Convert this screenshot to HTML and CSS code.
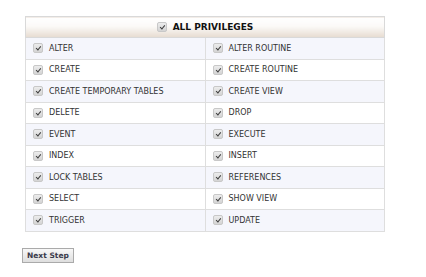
FILE: index.html
```
<!DOCTYPE html>
<html lang="en">
<head>
  <meta charset="UTF-8" />
  <title>Privileges</title>
  <link rel="stylesheet" href="styles.css">
</head>
<body>

  <table class="privs">
    <tr class="head">
      <th colspan="2"><label><span class="chk"></span>ALL PRIVILEGES</label></th>
    </tr>
    <tr class="odd">
      <td><label><span class="chk"></span>ALTER</label></td>
      <td><label><span class="chk"></span>ALTER ROUTINE</label></td>
    </tr>
    <tr>
      <td><label><span class="chk"></span>CREATE</label></td>
      <td><label><span class="chk"></span>CREATE ROUTINE</label></td>
    </tr>
    <tr class="odd">
      <td><label><span class="chk"></span>CREATE TEMPORARY TABLES</label></td>
      <td><label><span class="chk"></span>CREATE VIEW</label></td>
    </tr>
    <tr>
      <td><label><span class="chk"></span>DELETE</label></td>
      <td><label><span class="chk"></span>DROP</label></td>
    </tr>
    <tr class="odd">
      <td><label><span class="chk"></span>EVENT</label></td>
      <td><label><span class="chk"></span>EXECUTE</label></td>
    </tr>
    <tr>
      <td><label><span class="chk"></span>INDEX</label></td>
      <td><label><span class="chk"></span>INSERT</label></td>
    </tr>
    <tr class="odd">
      <td><label><span class="chk"></span>LOCK TABLES</label></td>
      <td><label><span class="chk"></span>REFERENCES</label></td>
    </tr>
    <tr>
      <td><label><span class="chk"></span>SELECT</label></td>
      <td><label><span class="chk"></span>SHOW VIEW</label></td>
    </tr>
    <tr class="odd">
      <td><label><span class="chk"></span>TRIGGER</label></td>
      <td><label><span class="chk"></span>UPDATE</label></td>
    </tr>
  </table>

  <div class="actions">
    <button class="btn">Next Step</button>
  </div>

</body>
</html>
```

FILE: styles.css
```
body {
  margin: 0;
  padding: 16px 0 0 25px;
  background: #fff;
  font-family: "DejaVu Sans", Verdana, sans-serif;
  color: #333;
}
.privs {
  width: 360px;
  border-collapse: collapse;
  border: 1px solid #d9d9d9;
  font-size: 8px;
}
.privs th {
  height: 20px;
  padding: 0;
  font-size: 9px;
  font-weight: bold;
  color: #111;
  text-align: center;
  background: linear-gradient(to bottom, #ffffff 0%, #fbf9f7 45%, #e6dbd0 100%);
  border-bottom: 1px solid #d9d9d9;
}
.privs td {
  width: 50%;
  height: 20.5px;
  padding: 0 0 0 7px;
  border: 1px solid #dedede;
  background: #fff;
}
.privs tr.odd td {
  background: #f5f6fc;
}
.privs label {
  display: flex;
  align-items: center;
  gap: 6px;
}
.privs th label {
  justify-content: center;
  gap: 6px;
}
.chk {
  position: relative;
  width: 8px;
  height: 8px;
  border: 1px solid #c8c8c8;
  border-radius: 2px;
  background: linear-gradient(to bottom, #ececec, #d4d4d4);
  flex: none;
}
.chk::after {
  content: "";
  position: absolute;
  left: 3px;
  top: 1px;
  width: 1.5px;
  height: 4px;
  border: solid #3a3a3a;
  border-width: 0 1.5px 1.5px 0;
  transform: rotate(40deg);
}
.actions {
  margin-top: 11px;
  margin-left: -3px;
}
.btn {
  font-family: "DejaVu Sans", Verdana, sans-serif;
  font-size: 7.5px;
  font-weight: bold;
  color: #3a3a4a;
  padding: 1px 4px;
  height: 15px;
  background: linear-gradient(to bottom, #f8f8f8, #dedede);
  border: 1px solid #aaa;
  border-radius: 0;
}
```
